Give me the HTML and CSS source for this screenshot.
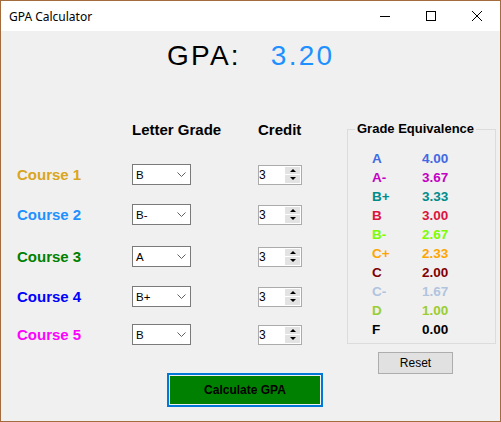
FILE: index.html
```html
<!DOCTYPE html>
<html>
<head>
<meta charset="utf-8">
<link rel="stylesheet" href="styles.css">
</head>
<body>
<div class="window">
  <div class="titlebar">
    <span class="title">GPA Calculator</span>
    <div class="controls">
      <span class="ctl"><svg width="10" height="10" viewBox="0 0 10 10"><line x1="0" y1="5.5" x2="10" y2="5.5" stroke="#000" stroke-width="1"/></svg></span>
      <span class="ctl"><svg width="10" height="10" viewBox="0 0 10 10"><rect x="0.5" y="0.5" width="9" height="9" fill="none" stroke="#000" stroke-width="1"/></svg></span>
      <span class="ctl"><svg width="10" height="10" viewBox="0 0 10 10"><path d="M0 0L10 10M10 0L0 10" stroke="#000" stroke-width="1"/></svg></span>
    </div>
  </div>
  <div class="client">
    <div class="gpa-row"><span class="gpa-label">GPA:</span><span class="gpa-value">3.20</span></div>
    <div class="main">
      <div class="form">
        <div class="head"><span></span><span>Letter Grade</span><span>Credit</span></div>
        <div class="courses">
          <div class="course">
            <span class="name c1">Course 1</span>
            <div class="combo"><span>B</span><svg width="9" height="5" viewBox="0 0 9 5"><polyline points="0.5,0.5 4.5,4.5 8.5,0.5" fill="none" stroke="#606060" stroke-width="1"/></svg></div>
            <div class="spinner"><span class="spin-val">3</span><span class="spin-btns"><span class="spin-btn"><i class="tri-up"></i></span><span class="spin-btn"><i class="tri-down"></i></span></span></div>
          </div>
          <div class="course">
            <span class="name c2">Course 2</span>
            <div class="combo"><span>B-</span><svg width="9" height="5" viewBox="0 0 9 5"><polyline points="0.5,0.5 4.5,4.5 8.5,0.5" fill="none" stroke="#606060" stroke-width="1"/></svg></div>
            <div class="spinner"><span class="spin-val">3</span><span class="spin-btns"><span class="spin-btn"><i class="tri-up"></i></span><span class="spin-btn"><i class="tri-down"></i></span></span></div>
          </div>
          <div class="course">
            <span class="name c3">Course 3</span>
            <div class="combo"><span>A</span><svg width="9" height="5" viewBox="0 0 9 5"><polyline points="0.5,0.5 4.5,4.5 8.5,0.5" fill="none" stroke="#606060" stroke-width="1"/></svg></div>
            <div class="spinner"><span class="spin-val">3</span><span class="spin-btns"><span class="spin-btn"><i class="tri-up"></i></span><span class="spin-btn"><i class="tri-down"></i></span></span></div>
          </div>
          <div class="course">
            <span class="name c4">Course 4</span>
            <div class="combo"><span>B+</span><svg width="9" height="5" viewBox="0 0 9 5"><polyline points="0.5,0.5 4.5,4.5 8.5,0.5" fill="none" stroke="#606060" stroke-width="1"/></svg></div>
            <div class="spinner"><span class="spin-val">3</span><span class="spin-btns"><span class="spin-btn"><i class="tri-up"></i></span><span class="spin-btn"><i class="tri-down"></i></span></span></div>
          </div>
          <div class="course">
            <span class="name c5">Course 5</span>
            <div class="combo"><span>B</span><svg width="9" height="5" viewBox="0 0 9 5"><polyline points="0.5,0.5 4.5,4.5 8.5,0.5" fill="none" stroke="#606060" stroke-width="1"/></svg></div>
            <div class="spinner"><span class="spin-val">3</span><span class="spin-btns"><span class="spin-btn"><i class="tri-up"></i></span><span class="spin-btn"><i class="tri-down"></i></span></span></div>
          </div>
        </div>
        <div class="calc">Calculate GPA</div>
      </div>
      <div class="side">
        <fieldset class="group">
          <legend>Grade Equivalence</legend>
          <div class="grades">
            <span class="g-a">A</span><span class="g-a">4.00</span>
            <span class="g-am">A-</span><span class="g-am">3.67</span>
            <span class="g-bp">B+</span><span class="g-bp">3.33</span>
            <span class="g-b">B</span><span class="g-b">3.00</span>
            <span class="g-bm">B-</span><span class="g-bm">2.67</span>
            <span class="g-cp">C+</span><span class="g-cp">2.33</span>
            <span class="g-c">C</span><span class="g-c">2.00</span>
            <span class="g-cm">C-</span><span class="g-cm">1.67</span>
            <span class="g-d">D</span><span class="g-d">1.00</span>
            <span class="g-f">F</span><span class="g-f">0.00</span>
          </div>
        </fieldset>
        <button class="reset">Reset</button>
      </div>
    </div>
  </div>
</div>
</body>
</html>
```
FILE: styles.css
```css
html, body { margin: 0; padding: 0; background: #f0f0f0; }
.window {
  width: 501px; height: 422px; box-sizing: border-box;
  border: 1px solid #a46c3c;
  display: flex; flex-direction: column;
  font-family: "Liberation Sans", Arial, sans-serif;
  color: #000;
}
.titlebar { height: 30px; flex: none; background: #fff; display: flex; align-items: center; }
.title { flex: 1; padding-left: 8px; font-family: "Noto Sans", "Open Sans", sans-serif; font-size: 12px; }
.controls { display: flex; align-self: stretch; }
.ctl { width: 46px; display: flex; align-items: center; justify-content: center; }
.ctl svg { display: block; }
.client { flex: 1; background: #f0f0f0; }

.gpa-row { margin-top: 10px; height: 30px; line-height: 30px; padding-left: 166px; display: flex; font-size: 28px; letter-spacing: 2.25px; }
.gpa-value { color: #1e90ff; margin-left: 30px; }

.main { display: flex; align-items: flex-start; margin-top: 50px; }
.form { margin-left: 16px; width: 330px; }
.head { display: grid; grid-template-columns: 115px 126px auto; font-size: 15px; font-weight: bold; line-height: 18px; }
.courses { margin-top: 25px; display: flex; flex-direction: column; gap: 19px; }
.course { display: grid; grid-template-columns: 115px 126px 44px; align-items: center; height: 21px; }
.course:nth-child(3) { margin-top: 2px; }
.course:nth-child(5) { margin-top: -2px; }
.name { font-size: 15px; font-weight: bold; line-height: 18px; }
.c1 { color: #daa520; }
.c2 { color: #1e90ff; }
.c3 { color: #008000; }
.c4 { color: #0000ff; }
.c5 { color: #ff00ff; }

.combo {
  width: 59px; height: 21px; box-sizing: border-box;
  border: 1px solid #7a7a7a; background: #fff;
  display: flex; align-items: center; justify-content: space-between;
  padding: 0 4px 0 3px; font-size: 11.5px;
}
.combo svg { display: block; }
.spinner {
  width: 44px; height: 20px; box-sizing: border-box;
  border: 1px solid #ababab; background: #fff;
  display: flex; padding: 1px 1px 1px 0;
}
.spin-val { flex: 1; font-size: 12px; line-height: 14px; padding-top: 1px; }
.spin-btns { width: 15px; display: flex; flex-direction: column; gap: 1px; }
.spin-btn { flex: 1; background: #e3e3e3; display: flex; align-items: center; justify-content: center; }
.tri-up { width: 0; height: 0; border-left: 3px solid transparent; border-right: 3px solid transparent; border-bottom: 3px solid #000; }
.tri-down { width: 0; height: 0; border-left: 3px solid transparent; border-right: 3px solid transparent; border-top: 3px solid #000; }

.calc {
  margin-top: 28px; margin-left: 150px;
  width: 156px; height: 34px; box-sizing: border-box;
  border: 2px solid #0078d7; background: #008000;
  box-shadow: inset 0 0 0 1px #f0f0f0;
  text-align: center; line-height: 30px;
  font-size: 12px; font-weight: bold;
}

.side { width: 149px; }
.group {
  margin: 0; width: 149px; box-sizing: border-box; min-width: 0;
  padding: 12px 0 4px 0; border: 1px solid #dcdcdc;
}
.group legend { padding: 0 2px; margin-left: 7px; font-size: 13px; font-weight: bold; line-height: 16px; white-space: nowrap; }
.grades { margin-left: 24px; display: grid; grid-template-columns: 50px auto; grid-auto-rows: 19px; align-items: center; font-size: 13.5px; font-weight: bold; }
.g-a { color: #4169e1; }
.g-am { color: #c400c4; }
.g-bp { color: #008b8b; }
.g-b { color: #dc143c; }
.g-bm { color: #7cfc00; }
.g-cp { color: #ffa500; }
.g-c { color: #800000; }
.g-cm { color: #b0c4de; }
.g-d { color: #9acd32; }
.g-f { color: #000; }

.reset {
  display: block; margin: 8px 0 0 31px; width: 75px; height: 22px; padding: 0;
  border: 1px solid #adadad; background: #e1e1e1;
  font-family: "Liberation Sans", Arial, sans-serif; font-size: 12px; color: #000;
}
```
